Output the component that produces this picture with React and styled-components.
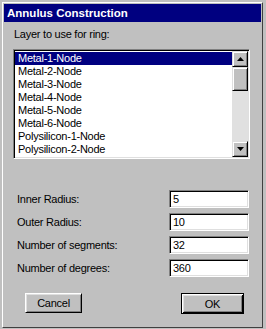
import React from "react";
import styled, { createGlobalStyle } from "styled-components";

const GlobalStyle = createGlobalStyle`
  html, body { margin: 0; padding: 0; background: #c0c0c0; }
  body {
    font-family: "Liberation Sans", Arial, sans-serif;
    font-size: 11px;
    color: #000;
  }
`;

const Shell = styled.div`
  width: 266px;
  height: 329px;
  box-sizing: border-box;
  padding: 2px 3px 1px 2px;
  background: #c0c0c0;
`;

const Frame = styled.div`
  height: 100%;
  box-sizing: border-box;
  border-top: 1px solid #fff;
  border-left: 1px solid #fff;
  border-right: 1px solid #404040;
  border-bottom: 1px solid #404040;
  padding: 1px;
  display: flex;
  flex-direction: column;
`;

const TitleBar = styled.div`
  height: 18px;
  background: #000080;
  color: #fff;
  font-weight: bold;
  font-size: 11.5px;
  display: flex;
  align-items: center;
  padding-left: 3px;
`;

const Body = styled.div`
  flex: 1;
  display: flex;
  flex-direction: column;
  padding-top: 6px;
  letter-spacing: -0.25px;
`;

const Caption = styled.div`
  margin-left: 10px;
  line-height: 13px;
  height: 13px;
`;

const ListBox = styled.div`
  margin: 8px 0 0 9px;
  width: 237px;
  height: 110px;
  box-sizing: border-box;
  background: #fff;
  border-top: 1px solid #808080;
  border-left: 1px solid #808080;
  border-right: 1px solid #fff;
  border-bottom: 1px solid #fff;
  box-shadow: inset 1px 1px 0 #000, inset -1px -1px 0 #dfdfdf;
  padding: 1px;
  display: flex;
`;

const Items = styled.div`
  flex: 1;
  padding: 1px 0;
  overflow: hidden;
`;

const Item = styled.div`
  height: 13px;
  line-height: 13px;
  padding-left: 3px;
  white-space: nowrap;
  background: ${(p) => (p.$selected ? "#000080" : "transparent")};
  color: ${(p) => (p.$selected ? "#fff" : "#000")};
`;

const ScrollBar = styled.div`
  width: 16px;
  display: flex;
  flex-direction: column;
  background: #e0e0e0;
`;

const ScrollButton = styled.div`
  height: ${(p) => p.$h || 16}px;
  box-sizing: border-box;
  background: #c0c0c0;
  border-top: 1px solid #dfdfdf;
  border-left: 1px solid #dfdfdf;
  border-right: 1px solid #000;
  border-bottom: 1px solid #000;
  box-shadow: inset 1px 1px 0 #fff, inset -1px -1px 0 #808080;
  display: flex;
  align-items: center;
  justify-content: center;
`;

const Track = styled.div`
  flex: 1;
`;

const Fields = styled.div`
  margin-top: 31px;
  display: flex;
  flex-direction: column;
  gap: 5px;
`;

const FieldRow = styled.div`
  display: flex;
  align-items: center;
  height: 18px;
`;

const FieldLabel = styled.div`
  flex: 1;
  margin-left: 13px;
`;

const Input = styled.div`
  width: 80px;
  height: 18px;
  margin-right: 12px;
  box-sizing: border-box;
  background: #fff;
  border-top: 1px solid #808080;
  border-left: 1px solid #808080;
  border-right: 1px solid #fff;
  border-bottom: 1px solid #fff;
  box-shadow: inset 1px 1px 0 #000, inset -1px -1px 0 #dfdfdf;
  padding-left: 3px;
  line-height: 16px;
`;

const Buttons = styled.div`
  margin-top: 16px;
  display: flex;
  align-items: flex-start;
`;

const Button = styled.div`
  width: ${(p) => p.$w}px;
  height: ${(p) => p.$h}px;
  box-sizing: border-box;
  background: #c0c0c0;
  display: flex;
  align-items: center;
  justify-content: center;
  margin-left: ${(p) => p.$ml};
  margin-right: ${(p) => p.$mr || "0"};
  border: 1px solid ${(p) => (p.$default ? "#000" : "transparent")};
  ${(p) =>
    p.$default
      ? `box-shadow: inset 1px 1px 0 #fff, inset -1px -1px 0 #000, inset 2px 2px 0 #dfdfdf, inset -2px -2px 0 #808080;`
      : `border-top-color: #fff; border-left-color: #fff; border-right-color: #000; border-bottom-color: #000;
         box-shadow: inset 1px 1px 0 #dfdfdf, inset -1px -1px 0 #808080;`}
`;

const Arrow = ({ down }) => (
  <svg width="7" height="4" viewBox="0 0 7 4">
    <polygon points={down ? "0,0 7,0 3.5,4" : "3.5,0 7,4 0,4"} fill="#000" />
  </svg>
);

const layers = [
  "Metal-1-Node",
  "Metal-2-Node",
  "Metal-3-Node",
  "Metal-4-Node",
  "Metal-5-Node",
  "Metal-6-Node",
  "Polysilicon-1-Node",
  "Polysilicon-2-Node",
];

const fields = [
  ["Inner Radius:", "5"],
  ["Outer Radius:", "10"],
  ["Number of segments:", "32"],
  ["Number of degrees:", "360"],
];

export default function App() {
  return (
    <>
      <GlobalStyle />
      <Shell>
        <Frame>
          <TitleBar>Annulus Construction</TitleBar>
          <Body>
            <Caption>Layer to use for ring:</Caption>
            <ListBox>
              <Items>
                {layers.map((l, i) => (
                  <Item key={l} $selected={i === 0}>
                    {l}
                  </Item>
                ))}
              </Items>
              <ScrollBar>
                <ScrollButton>
                  <Arrow />
                </ScrollButton>
                <ScrollButton $h={24} />
                <Track />
                <ScrollButton>
                  <Arrow down />
                </ScrollButton>
              </ScrollBar>
            </ListBox>
            <Fields>
              {fields.map(([label, value]) => (
                <FieldRow key={label}>
                  <FieldLabel>{label}</FieldLabel>
                  <Input>{value}</Input>
                </FieldRow>
              ))}
            </Fields>
            <Buttons>
              <Button $w={57} $h={20} $ml="21px">Cancel</Button>
              <Button $w={63} $h={21} $ml="auto" $mr="17px" $default>
                OK
              </Button>
            </Buttons>
          </Body>
        </Frame>
      </Shell>
    </>
  );
}
